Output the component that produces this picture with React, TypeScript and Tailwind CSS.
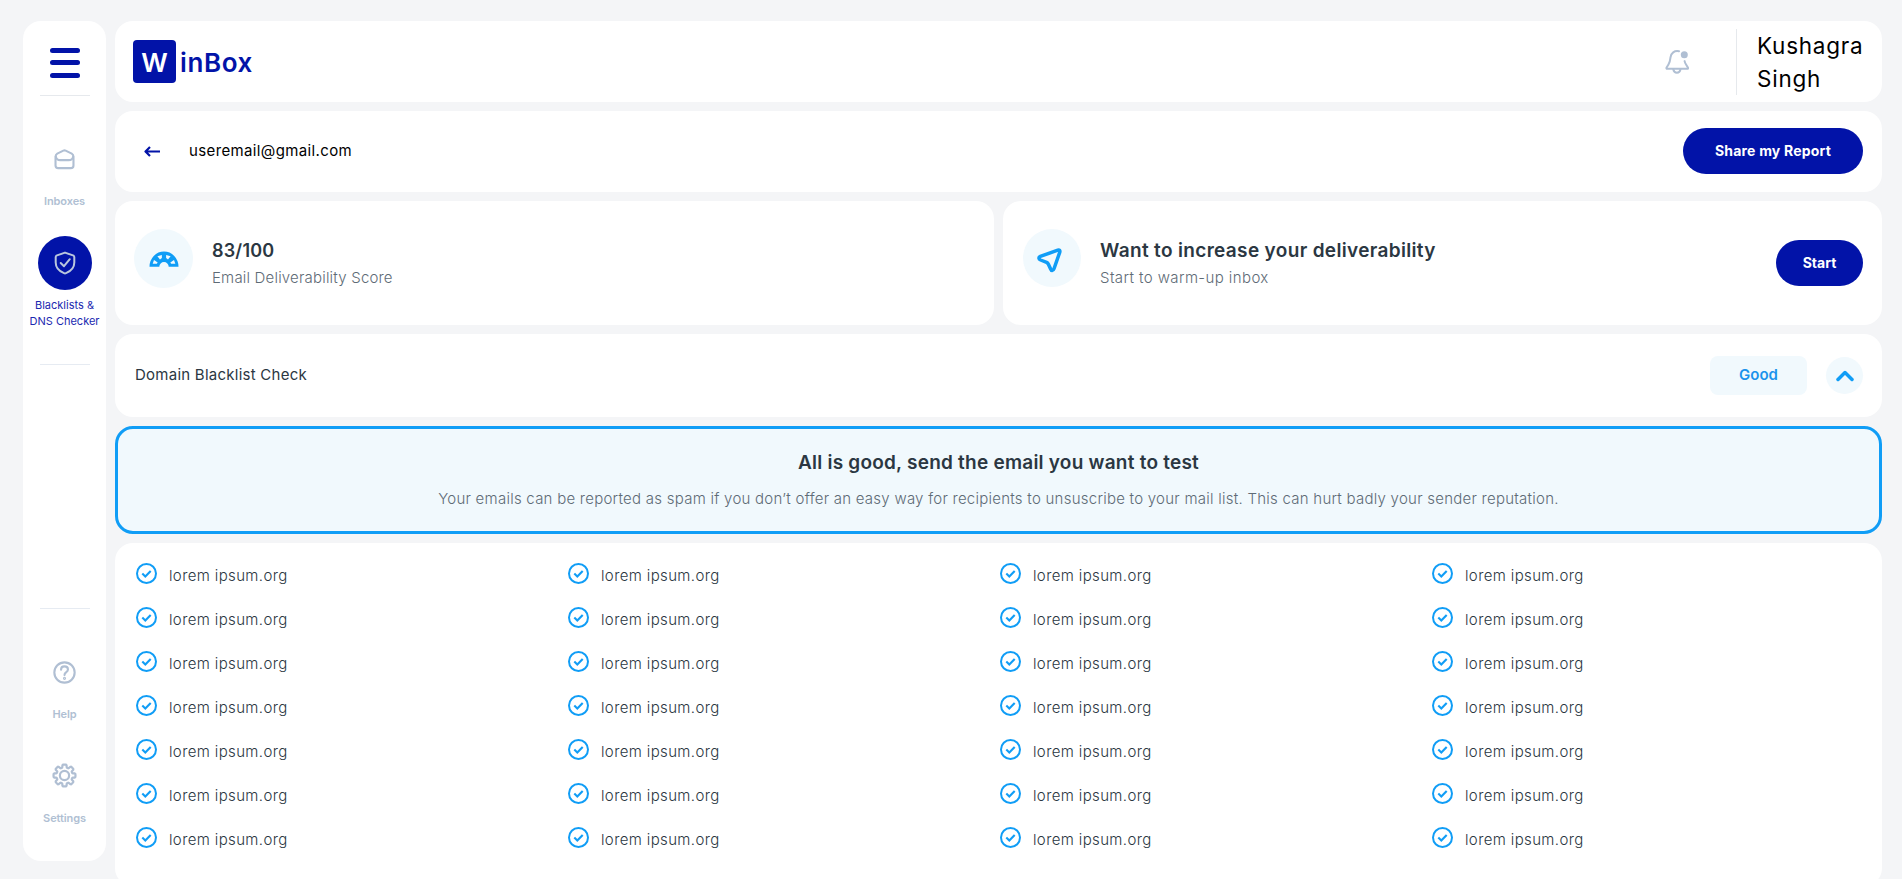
import type { ReactNode } from "react";

const columns = [0, 1, 2, 3];
const rows = [0, 1, 2, 3, 4, 5, 6];

function MenuIcon() {
  return (
    <svg width="30" height="30" viewBox="0 0 30 30" fill="#0213a8">
      <rect width="30" height="5" rx="2.5" />
      <rect y="12" width="30" height="5" rx="2.5" />
      <rect y="25" width="30" height="5" rx="2.5" />
    </svg>
  );
}

function MailIcon() {
  return (
    <svg width="21" height="21" viewBox="0 0 22 22" fill="none" stroke="#b0bfd3" strokeWidth="2.2" strokeLinejoin="round">
      <path d="M1.6 8.2C1.6 6.6 2 5.6 3.4 4.8L9.800 1.700c.8-.4 1.600-.4 2.400 0l6.400 3.100c1.400.8 1.800 1.800 1.800 3.400v9c0 1.900-.8 2.800-2.800 2.800H4.400c-2 0-2.800-.9-2.800-2.800z" />
      <path d="M1.800 7.400c.5 2.900 2.200 4.300 4.800 4.300h8.800c2.600 0 4.300-1.400 4.800-4.300" />
    </svg>
  );
}

function ShieldIcon() {
  return (
    <svg width="22" height="24" viewBox="0 0 22 24" fill="none" stroke="#b9c6dd" strokeWidth="2" strokeLinecap="round" strokeLinejoin="round">
      <path d="M11 1.600l8 2.800c.9.3 1.300.8 1.300 1.700v5.400c0 5.500-3.600 8.700-8.300 10.700-.7.300-1.300.3-2 0C5.300 20.200 1.700 17 1.700 11.500V6.100c0-.9.4-1.400 1.300-1.700z" />
      <path d="M6.700 12l3.300 3.200L15.800 8.200" />
    </svg>
  );
}

function HelpIcon() {
  return (
    <svg width="23" height="23" viewBox="0 0 24 24" fill="none" stroke="#b0bfd3" strokeWidth="2.200" strokeLinecap="round">
      <circle cx="12" cy="12" r="10.600" />
      <path d="M8.400 9.100c0-2.200 1.500-3.500 3.600-3.500s3.600 1.300 3.600 3.300c0 1.500-.9 2.200-2 2.900-1.100.8-1.600 1.300-1.600 2.900" />
      <circle cx="12" cy="18.100" r=".5" fill="#b0bfd3" />
    </svg>
  );
}

function GearIcon() {
  const teeth = 8;
  const points: [number, number][] = [];
  for (let i = 0; i < 128; i++) {
    const a = (i / 128) * Math.PI * 2;
    const wave = Math.cos(a * teeth) + 0.25;
    const r = 9.900 + 1.500 * Math.tanh(wave * 3.500);
    points.push([13 + r * Math.cos(a), 13 + r * Math.sin(a)]);
  }
  return (
    <svg width="25" height="25" viewBox="0 0 26 26" fill="none" stroke="#b0bfd3" strokeWidth="2.300" strokeLinejoin="round">
      <polygon points={points.map((p) => p.join(",")).join(" ")} />
      <circle cx="13" cy="13" r="4.800" />
    </svg>
  );
}

function BellIcon() {
  return (
    <svg width="24" height="24" viewBox="0 0 24 24" fill="none" stroke="#b0bfd3" strokeWidth="2" strokeLinecap="round" strokeLinejoin="round">
      <path d="M14 1.300C9.400.4 6 3 5.500 7.400c-.3 3.200-.5 5-2.200 7.400l-1.700 2.700c-.4.700-.1 1.300.7 1.300h20c.7 0 1-.5.600-1.200l-1.700-2.800c-.8-1.300-1.300-2.400-1.600-3.700" />
      <path d="M8.300 19.200c.3 2.300 1.600 3.600 3.600 3.600s3.300-1.300 3.600-3.600" />
      <circle cx="19.300" cy="4.700" r="3.500" fill="#b0bfd3" stroke="none" />
    </svg>
  );
}

function BackIcon() {
  return (
    <svg width="17" height="11" viewBox="0 0 17 11" fill="none" stroke="#0213a8" strokeWidth="2.200" strokeLinejoin="round">
      <path d="M16 5.500H2M6 1L1.500 5.500L6 10" />
    </svg>
  );
}

function GaugeIcon() {
  return (
    <svg width="30" height="16" viewBox="0 0 30 16">
      <path d="M.5 15.800A14.500 15.300 0 0 1 29.500 15.800H19.700A4.700 4.800 0 0 0 10.300 15.800Z" fill="#109df6" />
      <g fill="#f1f9fd">
        <path d="M3.700 12.700L5 8.900L8.700 11.600L7.800 12.700Z" />
        <path d="M8.400 5.300L12.900 3.900V7.100L11 8.400Z" />
        <path d="M21.600 5.300L17.100 3.900V7.100L19 8.400Z" />
        <path d="M26.300 12.700L25 8.900L21.300 11.600L22.200 12.700Z" />
      </g>
    </svg>
  );
}

function SendIcon() {
  return (
    <svg width="26" height="26" viewBox="0 0 26 26" fill="none" stroke="#109df6" strokeWidth="3.500" strokeLinejoin="round">
      <path d="M3.300 9.400L20.800 3.200c1.600-.5 2.400.3 2 1.900L17 21.800c-.8 2.300-2.700 2.200-3.500 0l-2.100-4.600c-.4-.8-1-1.400-1.800-1.800l-6-2.400c-2.200-1-2.200-2.900-.3-3.600z" />
    </svg>
  );
}

function CheckIcon() {
  return (
    <svg width="21" height="21" viewBox="0 0 21 21" fill="none" stroke="#109df6" strokeWidth="2">
      <circle cx="10.500" cy="10.500" r="9.500" />
      <path d="M6.300 10.600L9.300 13.500L14.700 7.900" strokeWidth="2.100" />
    </svg>
  );
}

function Card({ className, children }: { className: string; children?: ReactNode }) {
  return <div className={`rounded-[18px] bg-white ${className}`}>{children}</div>;
}

function Sidebar() {
  return (
    <Card className="flex h-[840px] w-[83px] shrink-0 flex-col items-center pt-[27px] text-[11px] leading-4 font-semibold text-[#b0bfd3]">
      <MenuIcon />
      <div className="mt-[17px] h-px w-[50px] bg-[#e6e9ed]" />
      <div className="mt-[53px]"><MailIcon /></div>
      <span className="mt-[23px] tracking-[-0.1px]">Inboxes</span>
      <div className="mt-[27px] flex size-[54px] shrink-0 items-center justify-center rounded-full bg-[#0213a8]">
        <ShieldIcon />
      </div>
      <span className="mt-[7px] text-center font-normal text-[#1a29b0]">
        Blacklists &amp;
        <br />
        DNS Checker
      </span>
      <div className="mt-[35px] h-px w-[50px] bg-[#e6ebf2]" />
      <div className="mt-[243px] h-px w-[50px] bg-[#e6ebf2]" />
      <div className="mt-[52px]"><HelpIcon /></div>
      <span className="mt-[22px] tracking-[-0.1px]">Help</span>
      <div className="mt-[41px]"><GearIcon /></div>
      <span className="mt-[22px] tracking-[-0.1px]">Settings</span>
    </Card>
  );
}

function Header() {
  return (
    <Card className="flex h-[81px] shrink-0 items-center justify-between pr-[18px] pl-[18px]">
      <div className="flex items-center gap-1 text-[26px] leading-none font-semibold text-[#0213a8]">
        <div className="flex h-[43px] w-[43px] items-center justify-center rounded-[4px] bg-[#0213a8] pt-0.5 text-[26px] text-white">W</div>
        <span className="pt-[3px] tracking-[0.6px]">inBox</span>
      </div>
      <div className="flex items-center">
        <BellIcon />
        <div className="ml-[47px] h-[66px] w-px bg-[#e6e9ed]" />
        <div className="ml-5 w-[107px] text-[22.5px] leading-[33px] tracking-[0.75px] text-black">
          Kushagra Singh
        </div>
      </div>
    </Card>
  );
}

function ScoreCards() {
  return (
    <div className="grid h-[124px] shrink-0 grid-cols-2 gap-[9px]">
      <Card className="flex pt-[28px] pl-[19px]">
        <div className="flex size-[59px] items-center justify-center rounded-full bg-[#f1f9fd]">
          <GaugeIcon />
        </div>
        <div className="ml-[19px] pt-[8px]">
          <div className="text-[18px] leading-[27px] font-semibold tracking-[0.2px] text-[#2b3742]">83/100</div>
          <div className="mt-[3px] text-[15px] leading-[22px] font-light tracking-[0.19px] text-[#5e6b76]">Email Deliverability Score</div>
        </div>
      </Card>
      <Card className="flex pt-[28px] pr-[19px] pl-[20px]">
        <div className="flex size-[58px] items-center justify-center rounded-full bg-[#f1f9fd] pt-1 pr-1">
          <SendIcon />
        </div>
        <div className="ml-[19px] grow pt-[8px]">
          <div className="text-[19px] leading-[27px] font-semibold tracking-[0.34px] text-[#2b3742]">Want to increase your deliverability</div>
          <div className="mt-[3px] text-[15px] leading-[22px] font-light tracking-[0.4px] text-[#5e6b76]">Start to warm-up inbox</div>
        </div>
        <button className="mt-[11px] h-[46px] w-[87px] rounded-full bg-[#0213a8] text-sm font-bold text-white">Start</button>
      </Card>
    </div>
  );
}

export default function App() {
  return (
    <div className="flex h-[879px] w-full gap-[9px] overflow-hidden bg-[#f4f5f7] pt-[21px] pr-5 pl-[23px] [font-family:Inter,sans-serif]">
      <Sidebar />
      <main className="flex grow flex-col gap-[9px]">
        <Header />
        <Card className="flex h-[81px] shrink-0 items-center pr-[19px] pl-[29px]">
          <BackIcon />
          <span className="ml-[28px] grow text-[15px] tracking-[0.37px] text-black">useremail@gmail.com</span>
          <button className="mb-px h-[46px] w-[180px] rounded-full bg-[#0213a8] text-sm font-bold tracking-[0.2px] text-white">Share my Report</button>
        </Card>
        <ScoreCards />
        <Card className="flex h-[83px] shrink-0 items-center pr-[19px] pl-[20px]">
          <span className="grow text-[15px] tracking-[0.25px] text-[#2b3742]">Domain Blacklist Check</span>
          <div className="flex h-[39px] w-[97px] items-center justify-center rounded-lg bg-[#f1f9fd] text-[15px] font-semibold text-[#1b93ec]">Good</div>
          <div className="ml-[19px] flex size-[37px] items-center justify-center rounded-full bg-[#f1f9fd]">
            <svg width="18" height="12" viewBox="0 0 18 12" fill="none" stroke="#109df6" strokeWidth="3.500" strokeLinecap="round" strokeLinejoin="round">
              <path d="M2 9.500L9 2.500L16 9.500" />
            </svg>
          </div>
        </Card>
        <div className="flex h-[108px] shrink-0 flex-col items-center rounded-[18px] border-3 border-[#109df6] bg-[#f1f9fd] pt-[20px]">
          <div className="text-[19px] leading-[27px] font-semibold tracking-[0.23px] text-[#2b3742]">All is good, send the email you want to test</div>
          <div className="mt-[12px] text-[15px] leading-[22px] font-light tracking-[0.25px] text-[#5e6b76]">
            Your emails can be reported as spam if you don’t offer an easy way for recipients to unsuscribe to your mail list. This can hurt badly your sender reputation.
          </div>
        </div>
        <Card className="grid h-[343px] shrink-0 grid-cols-4 pt-[20px] pr-[18px] pl-[21px]">
          {columns.map((column) => (
            <div key={column} className="flex flex-col">
              {rows.map((row) => (
                <div key={row} className="flex h-[44px] items-start">
                  <CheckIcon />
                  <span className="ml-[12px] pt-[2px] text-[15px] leading-[22px] font-light tracking-[0.37px] text-[#2b3742]">lorem ipsum.org</span>
                </div>
              ))}
            </div>
          ))}
        </Card>
      </main>
    </div>
  );
}
